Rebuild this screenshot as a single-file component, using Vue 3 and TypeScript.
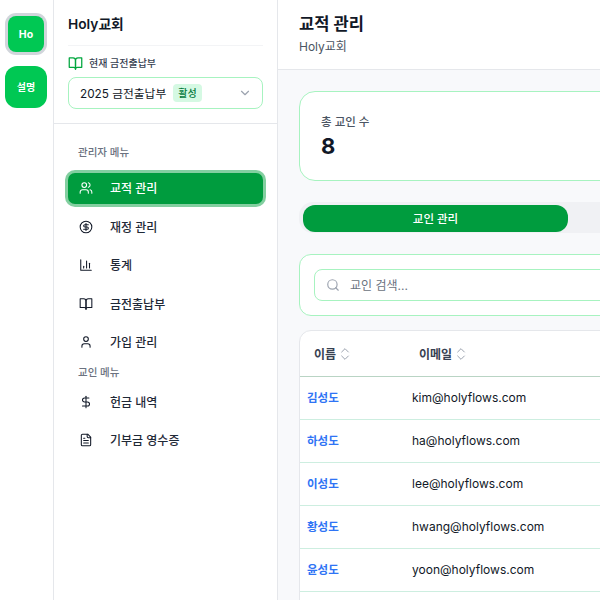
<script setup lang="ts">
interface NavItem { label: string; paths: string[]; circles?: [number, number, number][]; active?: boolean }
const adminItems: NavItem[] = [
  { label: '교적 관리', active: true, paths: ['M16 21v-2a4 4 0 0 0-4-4H6a4 4 0 0 0-4 4v2', 'M22 21v-2a4 4 0 0 0-3-3.87', 'M16 3.13a4 4 0 0 1 0 7.75'], circles: [[9, 7, 4]] },
  { label: '재정 관리', paths: ['M16 8h-6a2 2 0 1 0 0 4h4a2 2 0 1 1 0 4H8', 'M12 18V6'], circles: [[12, 12, 10]] },
  { label: '통계', paths: ['M3 3v18h18', 'M18 17V9', 'M13 17V5', 'M8 17v-3'] },
  { label: '금전출납부', paths: ['M2 3h6a4 4 0 0 1 4 4v14a3 3 0 0 0-3-3H2z', 'M22 3h-6a4 4 0 0 0-4 4v14a3 3 0 0 1 3-3h7z'] },
  { label: '가입 관리', paths: ['M19 21v-2a4 4 0 0 0-4-4H9a4 4 0 0 0-4 4v2'], circles: [[12, 7, 4]] },
]
const memberItems: NavItem[] = [
  { label: '헌금 내역', paths: ['M12 2v20', 'M17 5H9.5a3.5 3.5 0 0 0 0 7h5a3.5 3.5 0 0 1 0 7H6'] },
  { label: '기부금 영수증', paths: ['M15 2H6a2 2 0 0 0-2 2v16a2 2 0 0 0 2 2h12a2 2 0 0 0 2-2V7Z', 'M14 2v4a2 2 0 0 0 2 2h4', 'M10 9H8', 'M16 13H8', 'M16 17H8'] },
]
const members = [
  { name: '김성도', email: 'kim@holyflows.com' },
  { name: '하성도', email: 'ha@holyflows.com' },
  { name: '이성도', email: 'lee@holyflows.com' },
  { name: '황성도', email: 'hwang@holyflows.com' },
  { name: '윤성도', email: 'yoon@holyflows.com' },
  { name: '', email: '' },
]
</script>

<template>
  <div class="app">
    <aside class="rail">
      <button class="rail-btn selected">Ho</button>
      <button class="rail-btn wide">설명</button>
    </aside>

    <aside class="sidebar">
      <div class="side-top">
        <div class="church">Holy교회</div>
        <div class="ledger-label">
          <svg class="ledger-icon" viewBox="0 0 24 24"><path d="M2 3h6a4 4 0 0 1 4 4v14a3 3 0 0 0-3-3H2z" /><path d="M22 3h-6a4 4 0 0 0-4 4v14a3 3 0 0 1 3-3h7z" /></svg>
          <span>현재 금전출납부</span>
        </div>
        <div class="select">
          <span class="select-text">2025 금전출납부</span>
          <span class="badge">활성</span>
          <svg class="chev" viewBox="0 0 24 24"><path d="m6 9 6 6 6-6" /></svg>
        </div>
      </div>
      <nav class="nav">
        <div class="nav-title">관리자 메뉴</div>
        <div class="nav-list">
          <a v-for="it in adminItems" :key="it.label" class="nav-item" :class="{ active: it.active }">
            <svg class="nav-icon" viewBox="0 0 24 24">
              <path v-for="d in it.paths" :key="d" :d="d" />
              <circle v-for="c in it.circles" :key="c[0]" :cx="c[0]" :cy="c[1]" :r="c[2]" />
            </svg>
            <span class="nav-text">{{ it.label }}</span>
          </a>
        </div>
        <div class="nav-title second">교인 메뉴</div>
        <div class="nav-list">
          <a v-for="it in memberItems" :key="it.label" class="nav-item">
            <svg class="nav-icon" viewBox="0 0 24 24">
              <path v-for="d in it.paths" :key="d" :d="d" />
            </svg>
            <span class="nav-text">{{ it.label }}</span>
          </a>
        </div>
      </nav>
    </aside>

    <main class="main">
      <header class="header">
        <h1>교적 관리</h1>
        <p>Holy교회</p>
      </header>
      <div class="content">
        <section class="stat">
          <div class="stat-label">총 교인 수</div>
          <div class="stat-value">8</div>
        </section>
        <div class="tabs">
          <button class="tab on">교인 관리</button>
          <button class="tab"></button>
        </div>
        <section class="search-card">
          <div class="search">
            <svg class="search-icon" viewBox="0 0 24 24"><circle cx="11" cy="11" r="8" /><path d="m21 21-4.3-4.3" /></svg>
            <span class="placeholder">교인 검색...</span>
          </div>
        </section>
        <section class="table">
          <div class="thead">
            <div class="th">이름 <svg class="sort" viewBox="0 0 24 24"><path d="m7 15 5 5 5-5" /><path d="m7 9 5-5 5 5" /></svg></div>
            <div class="th">이메일 <svg class="sort" viewBox="0 0 24 24"><path d="m7 15 5 5 5-5" /><path d="m7 9 5-5 5 5" /></svg></div>
          </div>
          <div v-for="(m, i) in members" :key="i" class="tr">
            <div class="td name">{{ m.name }}</div>
            <div class="td">{{ m.email }}</div>
          </div>
        </section>
      </div>
    </main>
  </div>
</template>

<style>
html, body { margin: 0; overflow: hidden; }
</style>

<style scoped>
.app {
  display: flex;
  width: 600px;
  height: 600px;
  overflow: hidden;
  background: #fff;
  font-family: Inter, "Noto Sans CJK KR", sans-serif;
  color: #111827;
}
svg { fill: none; stroke: currentColor; stroke-width: 2; stroke-linecap: round; stroke-linejoin: round; flex: none; }
.rail {
  flex: none;
  width: 52px;
  padding-right: 1px;
  border-right: 1px solid #e5e7eb;
  display: flex;
  flex-direction: column;
  align-items: center;
  padding-top: 16px;
  gap: 14px;
  box-sizing: content-box;
}
.rail-btn {
  border: 0;
  padding: 0 0 2px;
  font: inherit;
  font-size: 10px;
  font-weight: 700;
  color: #fff;
  background: #00c853;
  border-radius: 12px;
  width: 42px;
  height: 42px;
}
.rail-btn.selected {
  width: 36px;
  height: 36px;
  padding: 0;
  border-radius: 8px;
  font-size: 10.5px;
  box-shadow: 0 0 0 3px #d1d5db;
}
.sidebar {
  flex: none;
  width: 223px;
  border-right: 1px solid #e5e7eb;
  display: flex;
  flex-direction: column;
}
.side-top {
  padding: 14px 14px 14px;
  border-bottom: 1px solid #e5e7eb;
}
.church {
  font-size: 13.75px;
  font-weight: 600;
  line-height: 20px;
  padding-bottom: 11px;
  border-bottom: 1px solid #f3f4f6;
  color: #111827;
}
.ledger-label {
  display: flex;
  align-items: center;
  gap: 6px;
  margin-top: 9px;
  font-size: 10px;
  line-height: 16px;
  font-weight: 500;
  color: #374151;
}
.ledger-icon { width: 15px; height: 15px; color: #00a63e; }
.select {
  display: flex;
  align-items: center;
  box-sizing: border-box;
  height: 32px;
  margin-top: 6px;
  padding: 0 11px;
  border: 1px solid #a7f3c0;
  border-radius: 8px;
  font-size: 11.75px;
}
.select-text { font-weight: 400; margin-bottom: 2px; }
.badge {
  margin-left: 7px;
  font-size: 10px;
  font-weight: 500;
  line-height: 18px;
  padding: 0 5px;
  border-radius: 4px;
  background: #d5f9e3;
  color: #047a3d;
}
.chev { margin-left: auto; width: 14px; height: 14px; color: #9ca3af; margin-right: -1px; }
.nav { padding: 21px 14px 0; }
.nav-title {
  font-size: 10.5px;
  font-weight: 500;
  line-height: 16px;
  color: #6b7280;
  padding-left: 10px;
  margin-bottom: 12px;
}
.nav-title.second { margin: 7px 0 6px; padding-left: 10px; }
.nav-list { display: flex; flex-direction: column; gap: 8px; }
.nav-item {
  display: flex;
  align-items: center;
  gap: 17px;
  height: 30.5px;
  padding-left: 11px;
  border-radius: 7px;
  font-size: 12px;
  font-weight: 500;
  color: #1f2937;
}
.nav-text { margin-bottom: 1px; }
.nav-item.active {
  background: #009c3e;
  color: #fff;
  box-shadow: 0 0 0 3px #83cfa0;
}
.nav-icon { width: 14px; height: 14px; stroke-width: 1.8; color: #111827; }
.nav-item.active .nav-icon { color: #fff; }
.main {
  flex: none;
  width: 1000px;
  background: #f8f9fb;
  display: flex;
  flex-direction: column;
}
.header {
  flex: none;
  height: 69px;
  box-sizing: content-box;
  background: #fff;
  border-bottom: 1px solid #e5e7eb;
  padding: 0 21px;
}
.header h1 {
  margin: 0;
  padding-top: 12px;
  font-size: 16.5px;
  line-height: 24px;
  font-weight: 600;
  color: #111827;
}
.header p {
  margin: 2px 0 0;
  font-size: 12px;
  line-height: 18px;
  color: #4b5563;
}
.content { flex: none; padding: 21px 21px 0; display: flex; flex-direction: column; }
.stat {
  box-sizing: border-box;
  height: 90px;
  background: #fff;
  border: 1px solid #a7f3c0;
  border-radius: 16px;
  padding: 20px 21px;
}
.stat-label { font-size: 11.5px; line-height: 20px; color: #4b5563; font-weight: 500; }
.stat-value { font-size: 22px; line-height: 28px; font-weight: 700; color: #111827; }
.tabs {
  margin-top: 21px;
  height: 31px;
  box-sizing: border-box;
  display: grid;
  grid-template-columns: 265px 265px;
  gap: 4px;
  padding: 3px 4px 1px;
  background: #f0f1f4;
  border-radius: 14px;
}
.tab {
  border: 0;
  background: transparent;
  padding: 0 0 2px;
  font: inherit;
  font-size: 11.5px;
  font-weight: 500;
  color: #4b5563;
  border-radius: 12px;
}
.tab.on { background: #009c3e; color: #fff; }
.search-card {
  margin-top: 21px;
  height: 62px;
  box-sizing: border-box;
  background: #fff;
  border: 1px solid #a7f3c0;
  border-radius: 12px;
  padding: 14px;
}
.search {
  box-sizing: border-box;
  height: 32px;
  display: flex;
  align-items: center;
  gap: 10px;
  padding-left: 11px;
  border: 1px solid #a7f3c0;
  border-radius: 8px;
  font-size: 12px;
  color: #6b7280;
}
.placeholder { margin-bottom: 2px; }
.search-icon { width: 14px; height: 14px; color: #9ca3af; }
.table {
  margin-top: 14px;
  background: #fff;
  border: 1px solid #e5e7eb;
  border-radius: 12px 12px 0 0;
}
.thead {
  display: grid;
  grid-template-columns: 105px 1fr;
  height: 45px;
  border-bottom: 1px solid #b9d4c4;
}
.th {
  display: flex;
  align-items: center;
  gap: 1px;
  padding-left: 14px;
  font-size: 12px;
  font-weight: 600;
  color: #374151;
}
.sort { width: 16px; height: 16px; color: #9ca3af; stroke-width: 1.5; }
.tr {
  display: grid;
  grid-template-columns: 105px 1fr;
  height: 42px;
  border-bottom: 1px solid #cdeee0;
}
.td {
  display: flex;
  align-items: center;
  padding: 0 0 2px 7px;
  font-size: 12px;
  color: #111827;
}
.td.name { font-size: 11.5px; font-weight: 600; color: #2f74f5; }
</style>
